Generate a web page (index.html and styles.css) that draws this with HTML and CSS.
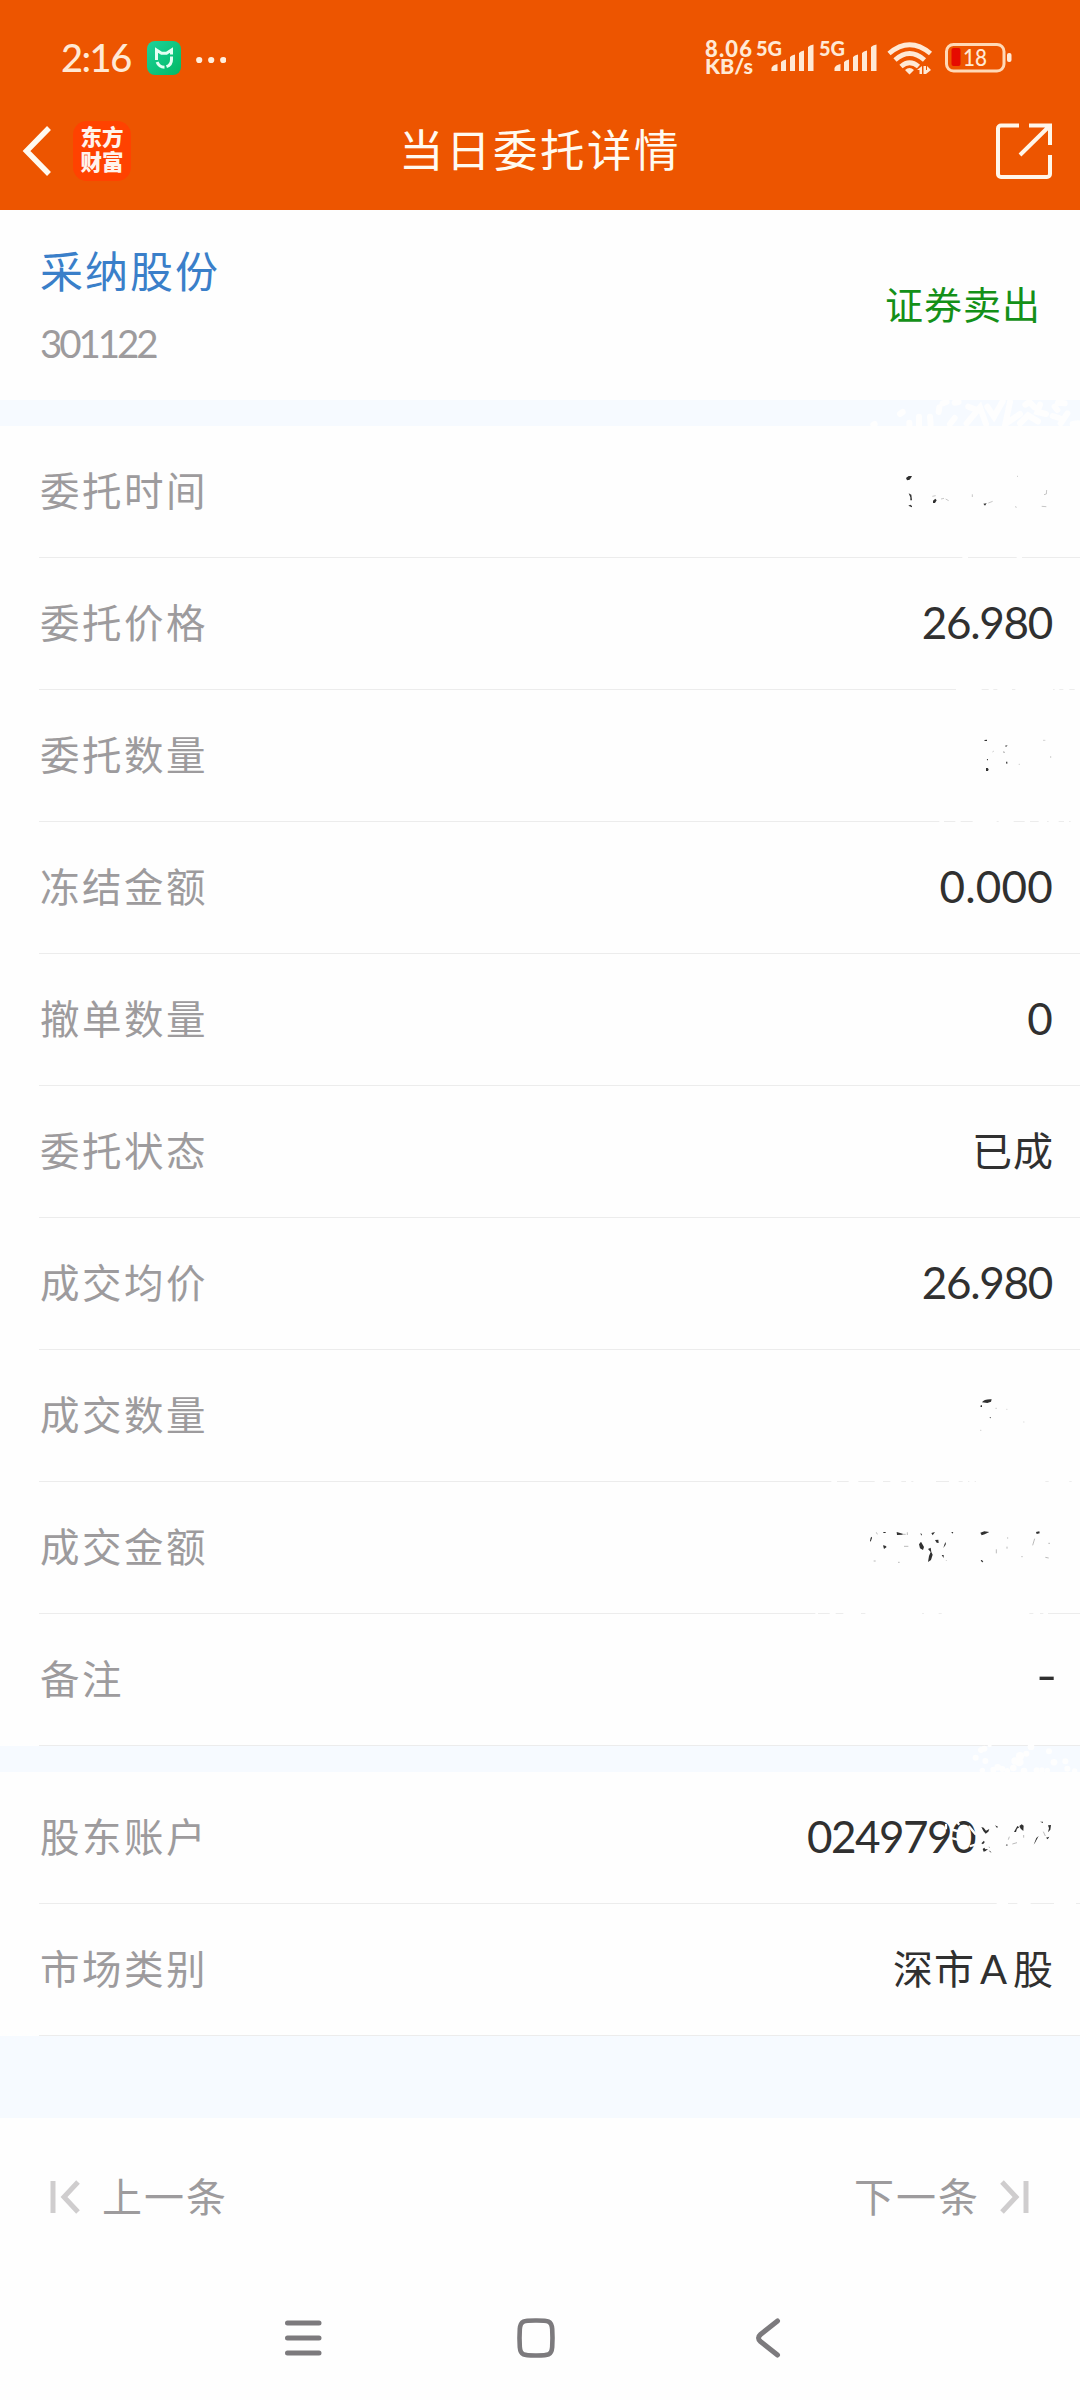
FILE: index.html
```html
<!DOCTYPE html>
<html lang="zh-CN">
<head>
<meta charset="utf-8">
<title>当日委托详情</title>
<link rel="stylesheet" href="styles.css">
</head>
<body>
<header class="header">
  <div class="status">
    <span class="clock">2:16</span>
    <svg class="app-dot" width="34" height="34" viewBox="0 0 34 34"><defs><linearGradient id="mi" x1="0" y1="0" x2="1" y2="1"><stop offset="0" stop-color="#1ed29b"/><stop offset="1" stop-color="#00b964"/></linearGradient></defs><rect width="34" height="34" rx="8" fill="url(#mi)"/><path d="M9.500 19V9l5 3.200h5l5-3.200v4.500M24.500 15.500v3a7.500 7.500 0 0 1-5 7.200M17.500 26.300a8 8 0 0 1-7.400-5.200" fill="none" stroke="#e4fff3" stroke-width="3"/></svg>
    <svg class="more" width="30" height="8" viewBox="0 0 30 8" fill="#ffeedd"><circle cx="3.200" cy="4" r="3.100"/><circle cx="15.200" cy="4" r="3.100"/><circle cx="27.200" cy="4" r="3.100"/></svg>
    <svg class="indicators" width="310" height="60" viewBox="703 28 310 60" fill="#ffe9d5">
      <g class="indicator-text">
        <text x="705" y="57" font-size="22" textLength="47">8.06</text>
        <text x="705" y="74" font-size="20" textLength="48" lengthAdjust="spacingAndGlyphs">KB/s</text>
        <text x="756" y="56" font-size="20" textLength="26" lengthAdjust="spacingAndGlyphs">5G</text>
        <text x="819" y="56" font-size="20" textLength="26" lengthAdjust="spacingAndGlyphs">5G</text>
      </g>
      <g id="bars"><path d="M771.500 71v-3q1-3 6-4v7zM781 71V62q1.500-2 5-2.500V71zM790 71V57q1.500-2 5-2.500V71zM799 71V53q1.500-2 5-2.500V71zM808 71V47q1.500-2 5.500-2.500V71z"/></g>
      <use href="#bars" x="63"/>
      <g fill="none" stroke="#ffe9d5" stroke-width="4.800"><path d="M889 53.500Q909.500 36 930.500 53.500M895 60Q909.500 47 924.500 60M901 66.500Q909.500 59 918.500 66.500"/></g>
      <path d="M905 70q4.500-4 9 0l-4.500 4.500zM917 70l5-4v8h-2.500v-4zM923.500 66h2.500v4h5l-5 4h-2.500zM927 66l4 4h-4z"/>
      <rect x="946.500" y="44.500" width="57.500" height="26.500" rx="7" fill="none" stroke="#ffd9b6" stroke-width="3"/>
      <rect x="951.500" y="48" width="9" height="18" rx="2" fill="#e60b00"/>
      <text x="963" y="66" font-size="23" class="charge" textLength="24" lengthAdjust="spacingAndGlyphs">18</text>
      <rect x="1007" y="53" width="4.500" height="9" rx="2"/>
    </svg>
  </div>
  <div class="titlebar">
    <svg class="back" width="30" height="52" viewBox="0 0 30 52"><path d="M27 3L4.500 26 27 49" fill="none" stroke="#fffaf0" stroke-width="5.500"/></svg>
    <div class="logo"><span>东方</span><span>财富</span></div>
    <h1 class="title">当日委托详情</h1>
    <svg class="share" width="58" height="58" viewBox="0 0 58 58"><path d="M24 3.500H6a3 3 0 0 0-3 3V52a3 3 0 0 0 3 3h46a3 3 0 0 0 3-3V33M34 3.500h21v19.500M55 3.500L25 33" fill="none" stroke="#fff6ea" stroke-width="4"/></svg>
  </div>
</header>

<main class="page">
  <section class="stock">
    <div class="stock-id"><span class="stock-name">采纳股份</span><span class="stock-code">301122</span></div>
    <span class="side">证券卖出</span>
  </section>
  <div class="band">
    <svg class="flecks" width="300" height="26" viewBox="0 570 900 78"><g stroke="#fefefe" stroke-width="18" stroke-linecap="round" fill="none"><path d="M360 612l8-6M417 620v28M388 638v10M450 620l2 24M476 606l2-14M488 580l12-4M524 578l12-2M510 642l14-18M565 590l20 8M560 640l40-48 18 50M622 590l20 30 26-46M690 576l-14 66 44-30M736 584l12-8 16 16M720 640l24-24 30 18M780 584l-8 22 26 6M824 590l8 10M818 618l20 6M862 610l-20 30M878 642l16-2M834 578l20 2M280 644l4-2"/></g></svg>
  </div>
  <section class="rows">
    <div class="row"><span class="label">委托时间</span>
      <svg class="remnant" width="300" height="132" viewBox="0 648 900 396"><path fill="#303030" d="M378 804l8-6h10l-2 4-5 7-8 2zM386 850l8 4 2 17h-5v-9zM385 887l6-3 5 4v4zM459 872l7-6 4 5-5 8h-6zM610 881l10-1-5 7z"/><path stroke="#aaa" stroke-width="2" fill="none" d="M457 859l10-2M483 867l9-2M497 867l9 5M577 853v8M705 890l5 2M800 840l-1 12-7 2M785 889l14 1M711 799h3M625 879l13-5"/><path fill="#fefefe" d="M547 1040h17v5h-17zM710 1040h16v5h-16z"/></svg></div>
    <div class="row"><span class="label">委托价格</span><span class="value price">26.980</span></div>
    <div class="row"><span class="label">委托数量</span>
      <svg class="remnant" width="300" height="132" viewBox="0 390 900 396"><path fill="#333" d="M613 540l8-1v4h-7zM618 624h5l3 4-2 5h-6zM675 557l8-1-5 5zM678 605h4v6h-3zM620 597h4v5zM669 575h4v4z"/><path stroke="#bbb" stroke-width="2" fill="none" d="M789 541h7M812 588v6M637 576l5-3M716 613h4"/><path fill="#fefefe" d="M478 782h14v5h-14zM526 782h16v5h-16zM578 782h72v5h-72zM656 782h45v5h-45zM734 782h16v5h-16zM776 782h25v5h-25zM806 782h30v5h-30zM852 782h15v5h-15zM872 782h28v5h-28zM528 386h77v5h-77zM626 386h14v5h-14zM652 386h44v5h-44zM706 386h113v5H706zM824 386h14v5h-14zM850 386h18v5h-18zM884 386h16v5h-16z"/></svg></div>
    <div class="row"><span class="label">冻结金额</span><span class="value zeros">0.000</span></div>
    <div class="row"><span class="label">撤单数量</span><span class="value zeros">0</span></div>
    <div class="row"><span class="label">委托状态</span><span class="value cjk">已成</span></div>
    <div class="row"><span class="label">成交均价</span><span class="value price">26.980</span></div>
    <div class="row"><span class="label">成交数量</span>
      <svg class="remnant" width="300" height="132" viewBox="0 -30 900 396"><path fill="#303030" d="M606 127q6-10 29-9l-2 7-11 4zM601 137l5-2v6h-4zM628 173l5-2-1 4z"/><path stroke="#bbb" stroke-width="2" d="M646 145h5M679 148h3M730 186h3M600 211h4"/><path fill="#fefefe" d="M154 362h17v5h-17zM206 362h29v5h-29zM284 362h25v5h-25zM331 362h33v5h-33zM378 362h16v5h-16zM400 362h68v5h-68zM507 362h29v5h-29zM548 362h16v5h-16zM568 362h16v5h-16zM588 362h208v5H588zM806 362h62v5h-62zM875 362h25v5h-25z"/></svg></div>
    <div class="row"><span class="label">成交金额</span>
      <svg class="remnant" width="300" height="132" viewBox="0 366 900 396"><path fill="#303030" d="M270 543l2-10 4-3v4l-4 11zM309 556l7 1 4 4-8 6zM350 516l18 5v3l-17 1zM417 553l6-8 9 16-3 9-9-5zM444 606l3-18 5-12-8-9 8-4 2 13 4 8-5 16zM454 519l11-3-7 10zM465 540l10-1 1 10-6-1zM490 564l4-13 4-5-1 8zM485 585h6v9zM601 518l12-4 15 2-14 7-9 3zM602 601l4-1 4 6-4 1zM768 516l10-2 1 6-9 2zM421 520l5 2-2 5zM310 516h7v3h-7zM514 516h6l-3 5z"/><path stroke="#999" stroke-width="2" fill="none" d="M289 517l3 6M367 523h10M382 517v8M372 559h13M281 603h6M354 607h5M649 568v12M681 560v6M764 536l-6 20M805 550h5M796 592l10 2M683 532v4M724 590h4M499 600v2"/><path fill="#fefefe" d="M106 758h8v5h-8zM149 758h18v5h-18zM190 758h53v5h-53zM256 758h170v5H256zM432 758h44v5h-44zM485 758h263v5H485zM760 758h20v5h-20zM790 758h14v5h-14z"/></svg></div>
    <div class="row"><span class="label">备注</span><span class="value dash">-</span></div>
  </section>
  <div class="band">
    <svg class="flecks" width="300" height="27" viewBox="0 45 900 81"><g fill="#fefefe"><circle cx="587" cy="83" r="9"/><circle cx="603" cy="60" r="9"/><circle cx="613" cy="56" r="9"/><circle cx="616" cy="93" r="9"/><circle cx="607" cy="121" r="8"/><circle cx="629" cy="46" r="6"/><circle cx="653" cy="112" r="10"/><circle cx="640" cy="119" r="9"/><circle cx="667" cy="117" r="9"/><circle cx="682" cy="122" r="8"/><circle cx="700" cy="114" r="10"/><circle cx="705" cy="93" r="11"/><circle cx="718" cy="96" r="13"/><circle cx="720" cy="78" r="12"/><circle cx="739" cy="71" r="9"/><circle cx="753" cy="50" r="10"/><circle cx="732" cy="123" r="10"/><circle cx="770" cy="121" r="9"/><circle cx="786" cy="120" r="8"/><circle cx="802" cy="121" r="8"/><circle cx="807" cy="64" r="9"/><circle cx="822" cy="97" r="10"/><circle cx="856" cy="94" r="9"/><circle cx="862" cy="116" r="9"/><circle cx="884" cy="123" r="8"/></g></svg>
  </div>
  <section class="rows">
    <div class="row"><span class="label">股东账户</span><span class="value account">0249790</span>
      <svg class="remnant" width="300" height="132" viewBox="0 126 900 396"><path stroke="#fefefe" stroke-width="7" stroke-linecap="round" fill="none" d="M498 285v10M532 276l4 6M518 325l14 4M520 300l12 3M568 290l18 22M572 348l14-4"/><path fill="#303030" d="M604 291l7 2 7 9 10-5-3 8-8 6-7-8zM604 340l8-8 2 5-5 6zM608 357l5-4 3 5 8-1-7 6-6 2zM626 361l9 6h-4zM702 306l10-18 6 4-7 4-3 10zM718 288l7-5 6 4-1 16-8-7zM761 344l8-20 7-6-10 19zM804 286l9-1-2 14-7 8 3-12zM798 323l10-3-5 8zM780 275h9v4zM677 345l5-2v5zM645 286l9 4-3 4z"/><path stroke="#999" stroke-width="2" fill="none" d="M627 350l2 4M688 320l-3 9M697 342l14-4M731 315v8M790 305l6 13"/><path fill="#fefefe" d="M650 518h34v5h-34zM712 518h40v5h-40zM822 518h66v5h-66z"/></svg></div>
    <div class="row"><span class="label">市场类别</span><span class="value cjk">深市<span class="latin">A</span>股</span></div>
  </section>
  <div class="band band-tall"></div>
  <nav class="pager">
    <span class="pager-link"><svg width="32" height="34" viewBox="0 0 32 34" fill="none" stroke="#cfcdce" stroke-width="5"><path d="M5 1v32M30 2L16 17l14 15"/></svg><span class="pager-text">上一条</span></span>
    <span class="pager-link pager-next"><span class="pager-text">下一条</span><svg width="32" height="34" viewBox="0 0 32 34" fill="none" stroke="#cfcdce" stroke-width="5"><path d="M28 1v32M4 2l14 15L4 32"/></svg></span>
  </nav>
</main>

<footer class="sysnav">
  <svg width="40" height="42" viewBox="0 0 40 42" fill="none" stroke="#7c7a7d" stroke-width="5" stroke-linecap="round"><path d="M4.500 6H36M4.500 21H36M4.500 36H36"/></svg>
  <svg width="40" height="42" viewBox="0 0 40 42" fill="none" stroke="#7c7a7d" stroke-width="4.600"><path d="M20 3.500c12 0 15.500-.2 16.200 8.500.4 6 .4 12 0 18-.7 8.700-4.200 8.500-16.200 8.500s-15.500.2-16.200-8.500c-.4-6-.4-12 0-18C4.500 3.300 8 3.500 20 3.500z"/></svg>
  <svg class="nav-back" width="26" height="42" viewBox="0 0 26 42" fill="none" stroke="#7c7a7d" stroke-width="5" stroke-linecap="round"><path d="M22.500 4L5.500 17.500q-4 3.500 0 7L22.500 38"/></svg>
</footer>
</body>
</html>
```
FILE: styles.css
```css
* { box-sizing: border-box; }

body {
  margin: 0;
  width: 1080px;
  height: 2400px;
  background: #fefefe;
  font-family: Lato, "Noto Sans CJK SC", sans-serif;
  overflow: hidden;
}

svg { display: block; flex: none; }

.header {
  height: 210px;
  background: #ed5500;
  color: #fffaf0;
}

.status {
  display: flex;
  align-items: center;
  height: 116px;
  padding: 0 67px 0 61px;
}

.clock {
  width: 86px;
  padding-bottom: 2px;
  font-size: 38px;
  line-height: 40px;
  letter-spacing: -1.5px;
  font-weight: 500;
  color: #ffe9d5;
}

.more { margin-left: 15px; margin-top: 3px; }
.indicators { margin-left: auto; }
.indicator-text { font-weight: 900; }
.charge { font-weight: 500; }

.titlebar {
  display: flex;
  align-items: center;
  height: 70px;
  padding: 0 27px 0 22px;
}

.logo {
  display: flex;
  flex-direction: column;
  align-items: center;
  justify-content: center;
  width: 58px;
  height: 60px;
  padding-bottom: 3px;
  margin-left: 21px;
  border-radius: 14px;
  background: #ff4200;
  font-size: 21.5px;
  line-height: 25px;
  font-weight: 900;
  color: #fff3ec;
}

.title {
  flex: 1;
  margin: 0 0 0 268px;
  padding-bottom: 2px;
  font-size: 44.5px;
  line-height: 64px;
  letter-spacing: 2.5px;
  font-weight: 400;
}

.stock {
  display: flex;
  align-items: center;
  justify-content: space-between;
  height: 190px;
  padding: 0 39px 0 40px;
}

.stock-id { display: flex; flex-direction: column; padding-top: 3px; }

.stock-name {
  font-size: 43px;
  line-height: 72px;
  letter-spacing: 2px;
  color: #3a7fc9;
}

.stock-code {
  font-size: 38.5px;
  line-height: 70px;
  letter-spacing: -3.1px;
  color: #9d9b9d;
}

.side {
  padding-bottom: 5px;
  font-size: 38px;
  letter-spacing: 1px;
  color: #149018;
}

.band { position: relative; height: 26px; background: #f6faff; }
.band-tall { height: 82px; }
.flecks { position: absolute; right: 0; bottom: 0; }

.row {
  position: relative;
  display: flex;
  align-items: center;
  justify-content: space-between;
  height: 132px;
  margin-left: 39px;
  padding: 0 27px 0 1px;
  border-bottom: 1px solid #ececec;
}

.rows { background: #fefefe; }

.label {
  padding-bottom: 6px;
  font-size: 39.5px;
  letter-spacing: 2.5px;
  color: #9d9b9d;
}

.value { padding-bottom: 3px; font-size: 44px; color: #303030; }
.price { letter-spacing: -1.3px; margin-right: 1px; }
.zeros { letter-spacing: 0.2px; }
.cjk { padding-bottom: 6px; font-size: 40px; letter-spacing: 1px; margin-right: -1px; }
.account { width: 246px; letter-spacing: -1.5px; }
.latin { margin: 0 5px; }
.dash { width: 17px; padding-bottom: 10px; transform: scaleX(1.3); transform-origin: left; }

.remnant { position: absolute; right: 0; top: 0; overflow: visible; }

.pager {
  display: flex;
  align-items: center;
  justify-content: space-between;
  height: 158px;
  padding: 0 50px 0 48px;
}

.pager-link {
  display: flex;
  align-items: center;
  gap: 22px;
  font-size: 40px;
  letter-spacing: 2px;
  color: #9d9b9d;
}

.pager-next { gap: 18px; }
.pager-text { padding-bottom: 5px; }

.sysnav {
  display: flex;
  align-items: center;
  gap: 193px;
  height: 124px;
  padding-left: 283px;
}

.nav-back { margin-left: 6px; }
```
